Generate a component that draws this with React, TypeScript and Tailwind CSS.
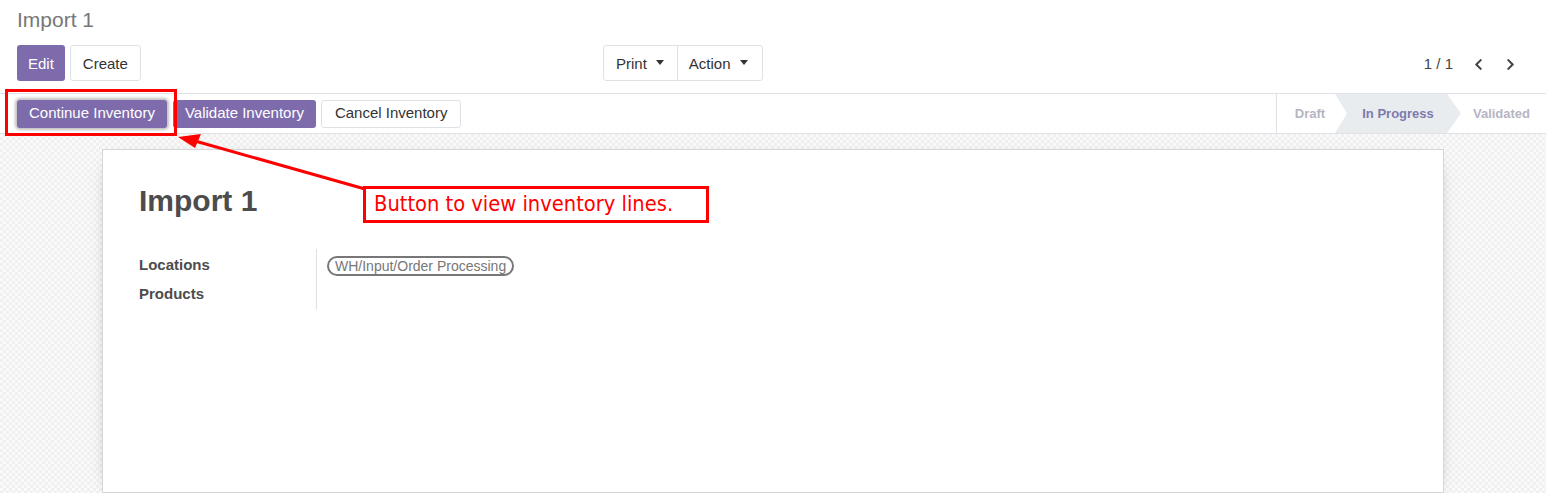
import React from "react";
import { FaChevronLeft, FaChevronRight } from "react-icons/fa";

const Caret = () => (
  <span className="inline-block ml-[9px] w-0 h-0 border-l-[4.5px] border-r-[4.5px] border-t-[5px] border-l-transparent border-r-transparent border-t-[#333] align-middle -translate-y-[2px]" />
);

const App = () => {
  return (
    <div className="w-[1555px] h-[493px] bg-white overflow-hidden font-['Liberation_Sans',Arial,sans-serif] text-[15px] text-[#4c4c4c] relative">
      <div className="w-[1546px] h-full flex flex-col">
        {/* control panel */}
        <div className="px-[17px] pt-[6px]">
          <h2 className="text-[21px] leading-[27px] text-[#777] font-normal">Import 1</h2>
          <div className="flex items-center mt-[12px] h-[36px]">
            <div className="flex gap-[5px] w-[586px]">
              <button className="h-[36px] pt-[2px] px-[11px] rounded-[3px] bg-[#7d6bab] text-white">Edit</button>
              <button className="h-[36px] pt-[2px] px-[12px] rounded-[3px] border border-[#dee2e6] text-[#333] bg-white">Create</button>
            </div>
            <div className="flex border border-[#dee2e6] rounded-[3px] h-[36px]">
              <button className="pt-[2px] pl-[12px] pr-[13px] text-[#333] border-r border-[#dee2e6]">
                Print
                <Caret />
              </button>
              <button className="pt-[2px] pl-[11px] pr-[14px] text-[#333]">
                Action
                <Caret />
              </button>
            </div>
            <div className="ml-auto flex items-center text-[#444] pr-[12px] pt-[2px]">
              <span className="mr-[19px]">1 / 1</span>
              <FaChevronLeft className="text-[13px] mr-[19px]" />
              <FaChevronRight className="text-[13px]" />
            </div>
          </div>
        </div>

        {/* statusbar */}
        <div className="mt-[12px] h-[41px] border-t border-b border-[#dee2e6] flex items-center bg-white">
          <div className="flex gap-[5px] pl-[17px]">
            <button className="h-[28px] px-[12px] rounded-[3px] bg-[#7d6bab] text-white shadow-[0_0_3px_2px_rgba(0,0,0,0.25)]">
              Continue Inventory
            </button>
            <button className="h-[28px] px-[12px] ml-[1px] rounded-[3px] bg-[#7d6bab] text-white">Validate Inventory</button>
            <button className="h-[28px] px-[13px] rounded-[3px] border border-[#dee2e6] text-[#333] bg-white">
              Cancel Inventory
            </button>
          </div>
          <div className="ml-auto h-full flex items-stretch border-l border-[#dee2e6] text-[13px] font-bold">
            <div className="w-[60px] pl-[6px] flex items-center justify-center text-[#b5b5c3]">Draft</div>
            <div className="w-[126px] -ml-[2px] flex items-center justify-center bg-[#e9ecef] text-[#7d7bad] [clip-path:polygon(0_0,calc(100%-14px)_0,100%_50%,calc(100%-14px)_100%,0_100%,12px_50%)]">
              In Progress
            </div>
            <div className="w-[101px] -ml-[16px] pl-[12px] flex items-center justify-center text-[#b5b5c3]">Validated</div>
          </div>
        </div>

        {/* content */}
        <div className="flex-1 pt-[15px] px-[102px] bg-[#f8f8f8] bg-[image:conic-gradient(#f0f0f0_25%,#fafafa_0_50%,#f0f0f0_0_75%,#fafafa_0)] bg-[length:6px_6px]">
          <div className="h-full bg-white border border-[#d6d6d6] shadow-[0_5px_20px_-15px_black] px-[36px] pt-[32px]">
            <h1 className="text-[30px] leading-[38px] font-bold text-[#4c4c4c]">Import 1</h1>
            <div className="mt-[29px] flex">
              <div className="w-[178px] border-r border-[#dee2e6] font-bold text-[#4c4c4c] flex flex-col gap-[9px] py-[6px]">
                <div className="leading-[20px]">Locations</div>
                <div className="leading-[20px]">Products</div>
              </div>
              <div className="pl-[10px] pt-[6px]">
                <span className="inline-block border-2 border-[#777] rounded-full px-[6px] text-[14px] leading-[16px] text-[#777]">
                  WH/Input/Order Processing
                </span>
              </div>
            </div>
          </div>
        </div>
      </div>

      {/* annotation overlay */}
      <div className="absolute left-[363px] top-[186px] w-[346px] h-[37px] border-[3px] border-[#ff0000] bg-white flex items-center pl-[8px] pb-[1px] whitespace-nowrap font-['DejaVu_Sans_Condensed','DejaVu_Sans',sans-serif] text-[21.7px] leading-[28px] text-[#ff0000]">
        Button to view inventory lines.
      </div>
      <div className="absolute left-[5px] top-[89px] w-[172px] h-[47px] border-[3px] border-[#ff0000]" />
      <svg className="absolute left-0 top-0 pointer-events-none" width="1555" height="493">
        <line x1="365" y1="189" x2="195" y2="141" stroke="#ff0000" strokeWidth="3" />
        <polygon points="178,137 201,134 195,148" fill="#ff0000" />
      </svg>
    </div>
  );
};

export default App;
